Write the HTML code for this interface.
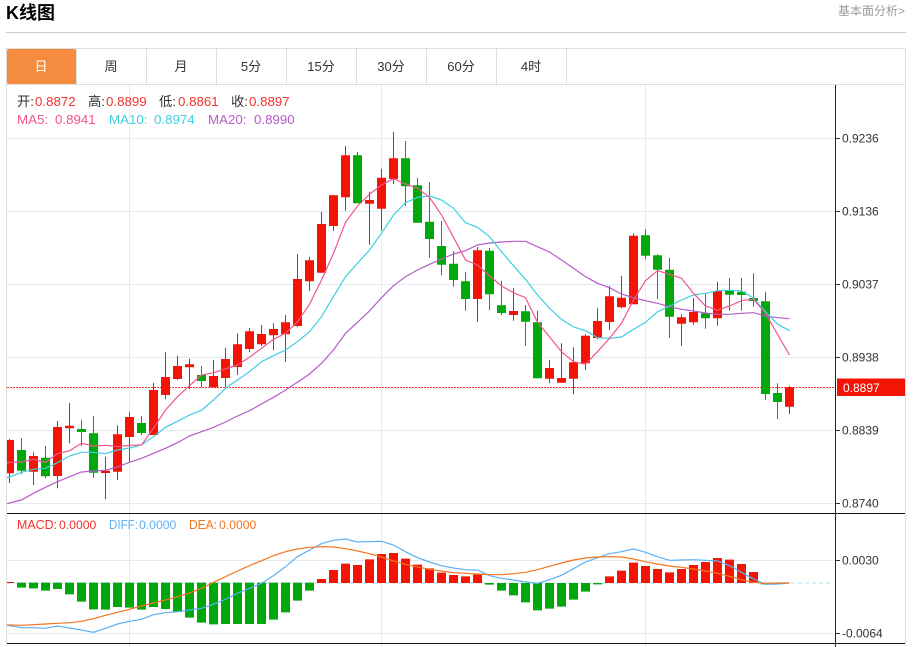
<!DOCTYPE html>
<html lang="zh"><head><meta charset="utf-8"><title>K线图</title>
<style>
html,body{margin:0;padding:0;background:#fff;width:913px;height:647px;overflow:hidden}
svg{position:absolute;left:0;top:0;display:block}
text{font-family:"Liberation Sans","Noto Sans CJK SC",sans-serif}
</style></head><body>
<svg width="913" height="647" viewBox="0 0 913 647" xmlns="http://www.w3.org/2000/svg">
<defs><clipPath id="c"><rect x="7" y="85" width="828.5" height="562"/></clipPath></defs>
<text x="6" y="19" font-size="18" font-weight="700" fill="#000">K线图</text>
<text x="905" y="15" font-size="12" fill="#999" text-anchor="end">基本面分析&gt;</text>
<path d="M6 32.5H906" stroke="#ccc" fill="none"/>
<path d="M6.5 647V48.5H905.5V647" stroke="#ddd" fill="none"/>
<path d="M7 84.5H905M76.5 49V84M146.5 49V84M216.5 49V84M286.5 49V84M356.5 49V84M426.5 49V84M496.5 49V84M566.5 49V84" stroke="#ddd" fill="none"/>
<path d="M9 49H74a2 2 0 0 1 2 2V84H9a2 2 0 0 1-2-2V51a2 2 0 0 1 2-2z" fill="#f48b3f"/>
<g font-size="13" fill="#333" text-anchor="middle">
<text x="41" y="71" fill="#fff">日</text><text x="111" y="71">周</text><text x="181" y="71">月</text><text x="251" y="71">5分</text><text x="321" y="71">15分</text><text x="391" y="71">30分</text><text x="461" y="71">60分</text><text x="531" y="71">4时</text>
</g>
<!-- grid -->
<path d="M7 138.5H835M7 211.5H835M7 284.5H835M7 357.5H835M7 430.5H835M7 503.5H835M7 560.5H835M7 633.5H835M129.5 85V647M381.5 85V647M645.5 85V647" stroke="#e2ebf2" fill="none"/>
<g clip-path="url(#c)">
<path d="M7 387.5H835" stroke="#f5362c" stroke-dasharray="2 1" fill="none"/>
<!-- wicks -->
<path fill="none" stroke="#f21505" d="M9.5 439V483M33.5 452.3V485M57.5 421V488.3M69.5 403V443.3M105.5 456.7V499.3M117.5 425.3V480M129.5 412.3V462M153.5 383V435M165.5 352.3V399.3M177.5 355.7V380M189.5 358.7V389.3M213.5 360V387.3M225.5 348V387.3M237.5 333.3V375M249.5 328V352.3M261.5 325V346M273.5 323.3V350.3M285.5 315V361.7M297.5 254V326.7M309.5 256.7V291M321.5 212V272.7M333.5 195V230.7M345.5 146V210.7M369.5 191.7V244.7M381.5 168.7V230.7M393.5 132V184M477.5 247V321.7M513.5 288.3V320.7M549.5 360V383.3M561.5 343.3V382.7M573.5 347.3V394.3M585.5 334.3V370M597.5 308.3V339.3M609.5 286V330M621.5 276V308.3M633.5 233.3V304.3M681.5 314.3V346M693.5 298V324.7M717.5 281.7V325.7M789.5 386V414"/>
<path fill="none" stroke="#00a80a" d="M21.5 438.3V474M45.5 446V478.3M81.5 419.7V446M93.5 415.7V477.7M141.5 416V435M201.5 366V387.3M357.5 152V203.3M405.5 141V206M417.5 178V222.7M429.5 182.3V257.7M441.5 221V275.3M453.5 251V286.7M465.5 271.7V310.7M489.5 248V310M501.5 280.7V315M525.5 305V345.7M537.5 310.7V378.3M645.5 229.3V259.3M657.5 254.3V299M669.5 257.7V337.7M705.5 294V328.7M729.5 278V310.7M741.5 278V310.7M753.5 273.3V306.7M765.5 291.7V400M777.5 383.3V419"/>
<!-- bodies -->
<path fill="#f21505" d="M5 440h9V473.3h-9zM29 456h9V471.7h-9zM53 427h9V476h-9zM65 425.7h9V428.3h-9zM101 470.7h9V473h-9zM113 434.3h9V471.7h-9zM125 417h9V437h-9zM149 390h9V435h-9zM161 377h9V395h-9zM173 366h9V379h-9zM185 364.3h9V367.3h-9zM209 376h9V387.3h-9zM221 359h9V378h-9zM233 344.3h9V367h-9zM245 331.3h9V349h-9zM257 334h9V344.3h-9zM269 329h9V335.3h-9zM281 322.3h9V334.3h-9zM293 279h9V326h-9zM305 260.3h9V281.3h-9zM317 224h9V272.7h-9zM329 195.3h9V226h-9zM341 155.3h9V197.3h-9zM365 200h9V203.7h-9zM377 177.7h9V208.7h-9zM389 158.3h9V179h-9zM473 250.3h9V299h-9zM509 311h9V315h-9zM545 368h9V378.7h-9zM557 378h9V382.7h-9zM569 362.3h9V378.7h-9zM581 335.7h9V363.3h-9zM593 321h9V338h-9zM605 296.3h9V322h-9zM617 297.7h9V307.3h-9zM629 235.7h9V304.3h-9zM677 317.3h9V323.7h-9zM689 312h9V322.3h-9zM713 291h9V318.3h-9zM785 387.3h9V406.7h-9z"/>
<path fill="#00a80a" d="M17 450h9V470.7h-9zM41 457.7h9V476.3h-9zM77 429h9V432h-9zM89 433.3h9V472.7h-9zM137 423h9V433h-9zM197 375h9V381h-9zM353 155.3h9V203.3h-9zM401 158.3h9V186.3h-9zM413 185.3h9V222.7h-9zM425 221.7h9V239h-9zM437 246h9V264.7h-9zM449 263.7h9V280h-9zM461 281.3h9V299h-9zM485 250.7h9V294.3h-9zM497 305.3h9V313h-9zM521 311.3h9V321.7h-9zM533 322.3h9V378.3h-9zM641 235.3h9V255.7h-9zM653 255.3h9V269.7h-9zM665 269.7h9V316.7h-9zM701 313.3h9V318.3h-9zM725 291h9V294.7h-9zM737 291.7h9V295h-9zM749 298h9V301h-9zM761 301.3h9V394h-9zM773 393h9V402h-9z"/>
<!-- MAs -->
<polyline fill="none" stroke="#b65bca" stroke-width="1.2" points="7,503.7 9.5,503 21.5,500 33.5,493.3 45.5,487.3 57.5,481.7 69.5,476.7 81.5,472 93.5,471 105.5,470.3 117.5,467 129.5,462.3 141.5,458.3 153.5,453.3 165.5,448.3 177.5,442.7 189.5,436 201.5,431.7 213.5,427.3 225.5,422 237.5,416 249.5,410.7 261.5,404 273.5,397.3 285.5,390 297.5,382.3 309.5,374 321.5,363.3 333.5,350 345.5,333.3 357.5,322.3 369.5,311 381.5,297.7 393.5,285.7 405.5,276.7 417.5,270 429.5,264.3 441.5,259 453.5,254 465.5,250.7 477.5,245 489.5,243 501.5,242 513.5,241.3 525.5,241.3 537.5,246.7 549.5,252 561.5,260 573.5,268.3 585.5,276.7 597.5,283.3 609.5,287.7 621.5,294 633.5,297.7 645.5,300.7 657.5,303.3 669.5,306.7 681.5,309.3 693.5,311 705.5,313 717.5,314.3 729.5,314.3 741.5,313.3 753.5,312.7 765.5,316 777.5,317.7 789.5,318.7"/>
<polyline fill="none" stroke="#3ccfe2" stroke-width="1.2" points="7,477.7 9.5,477 21.5,472.3 33.5,469.3 45.5,468.3 57.5,462.7 69.5,456 81.5,452.3 93.5,452.3 105.5,453.7 117.5,450 129.5,448 141.5,445 153.5,436.7 165.5,427.3 177.5,421.3 189.5,415 201.5,410.3 213.5,400 225.5,388.3 237.5,380 249.5,371.7 261.5,361.7 273.5,355.7 285.5,350 297.5,341.7 309.5,331.7 321.5,316.7 333.5,296.7 345.5,276.7 357.5,263.3 369.5,250 381.5,233.3 393.5,215 405.5,202.7 417.5,197.3 429.5,196 441.5,200 453.5,208.3 465.5,222.7 477.5,227.3 489.5,236.7 501.5,251.7 513.5,265.7 525.5,279.3 537.5,295 549.5,308.3 561.5,319.3 573.5,327 585.5,330.7 597.5,337.7 609.5,338.3 621.5,337 633.5,329.3 645.5,322.3 657.5,311.7 669.5,306 681.5,300 693.5,295 705.5,293.3 717.5,290.7 729.5,290.3 741.5,290.7 753.5,298.3 765.5,311.7 777.5,324 789.5,330.7"/>
<polyline fill="none" stroke="#f2558f" stroke-width="1.2" points="7,463.3 9.5,462.3 21.5,462 33.5,459.3 45.5,462.3 57.5,453.7 69.5,450.7 81.5,443.3 93.5,446 105.5,445.3 117.5,446.7 129.5,445.3 141.5,445 153.5,428.3 165.5,410 177.5,396.7 189.5,385.7 201.5,375 213.5,372.7 225.5,369 237.5,365 249.5,357.3 261.5,348.3 273.5,339.3 285.5,333.3 297.5,321.7 309.5,304.3 321.5,280 333.5,253.3 345.5,222.3 357.5,206 369.5,194.3 381.5,185 393.5,178.7 405.5,184 417.5,188.3 429.5,197.3 441.5,215 453.5,237.3 465.5,260 477.5,265 489.5,276 501.5,286 513.5,292.7 525.5,297.7 537.5,322.3 549.5,336.7 561.5,351.7 573.5,361.7 585.5,364.3 597.5,351.7 609.5,338.3 621.5,323.3 633.5,300 645.5,280.7 657.5,270.7 669.5,274.3 681.5,278.3 693.5,293.3 705.5,306 717.5,310.3 729.5,306 741.5,300.7 753.5,299.3 765.5,313.3 777.5,334.3 789.5,355"/>
<!-- MACD -->
<path d="M7 583H832" stroke="#bfe3f0" stroke-width="1.2" stroke-dasharray="4 3" fill="none"/>
<g transform="translate(0 505) scale(.33333)">
<path fill="#f21505" d="M21 231H42V234H21zM951 222h27V234h-27zM987 195h27V234h-27zM1023 176h27V234h-27zM1059 180h27V234h-27zM1095 163h27V234h-27zM1131 147h27V234h-27zM1167 144h27V234h-27zM1203 161h27V234h-27zM1239 179h27V234h-27zM1275 190h27V234h-27zM1311 203h27V234h-27zM1347 210h27V234h-27zM1383 214h27V234h-27zM1419 209h27V234h-27zM1815 214h27V234h-27zM1851 197h27V234h-27zM1887 173h27V234h-27zM1923 183h27V234h-27zM1959 192h27V234h-27zM1995 202h27V234h-27zM2031 192h27V234h-27zM2067 180h27V234h-27zM2103 171h27V234h-27zM2139 159h27V234h-27zM2175 164h27V234h-27zM2211 177h27V234h-27zM2247 201h27V234h-27z"/>
<path fill="#00a80a" d="M51 233h27V248h-27zM87 233h27V250h-27zM123 233h27V257h-27zM159 233h27V252h-27zM195 233h27V268h-27zM231 233h27V290h-27zM267 233h27V313h-27zM303 233h27V314h-27zM339 233h27V306h-27zM375 233h27V308h-27zM411 233h27V314h-27zM447 233h27V306h-27zM483 233h27V312h-27zM519 233h27V321h-27zM555 233h27V338h-27zM591 233h27V353h-27zM627 233h27V358h-27zM663 233h27V357h-27zM699 233h27V357h-27zM735 233h27V357h-27zM771 233h27V357h-27zM807 233h27V344h-27zM843 233h27V322h-27zM879 233h27V287h-27zM915 233h27V257h-27zM1455 234h27V239h-27zM1491 234h27V257h-27zM1527 234h27V271h-27zM1563 234h27V292h-27zM1599 234h27V316h-27zM1635 234h27V311h-27zM1671 234h27V305h-27zM1707 234h27V284h-27zM1743 234h27V260h-27zM1779 234h27V238h-27zM2283 234h27V238h-27zM2319 234h27V238h-27z"/>
<polyline fill="none" stroke="#5cb0f5" stroke-width="3.6" points="21,360 28.5,362 64.5,368 100.5,368 136.5,370 172.5,363 208.5,369 244.5,375 280.5,382 316.5,370 352.5,357 388.5,349 424.5,343 460.5,329 496.5,323 532.5,320 568.5,315 604.5,310 640.5,298 676.5,283 712.5,265 748.5,250 784.5,235 820.5,212 856.5,185 892.5,155 928.5,135 964.5,116 1000.5,106 1036.5,102 1072.5,111 1108.5,110 1144.5,109 1180.5,120 1216.5,140 1252.5,158 1288.5,171 1324.5,182 1360.5,189 1396.5,194 1432.5,195 1468.5,212 1504.5,220 1540.5,225 1576.5,231 1612.5,235 1648.5,224 1684.5,211 1720.5,191 1756.5,171 1792.5,158 1828.5,146 1864.5,140 1900.5,132 1936.5,142 1972.5,155 2008.5,166 2044.5,165 2080.5,164 2116.5,166 2152.5,168 2188.5,182 2224.5,202 2260.5,222 2296.5,238 2332.5,237 2368.5,234"/>
<polyline fill="none" stroke="#f5751f" stroke-width="3.6" points="21,360 28.5,360 64.5,361 100.5,359 136.5,357 172.5,355 208.5,353 244.5,349 280.5,341 316.5,331 352.5,322 388.5,313 424.5,303 460.5,294 496.5,285 532.5,275 568.5,264 604.5,250 640.5,232 676.5,215 712.5,198 748.5,182 784.5,167 820.5,152 856.5,140 892.5,132 928.5,127 964.5,125 1000.5,126 1036.5,131 1072.5,138 1108.5,146 1144.5,156 1180.5,168 1216.5,178 1252.5,186 1288.5,193 1324.5,198 1360.5,203 1396.5,205 1432.5,207 1468.5,209 1504.5,209 1540.5,206 1576.5,202 1612.5,194 1648.5,184 1684.5,174 1720.5,165 1756.5,159 1792.5,156 1828.5,155 1864.5,156 1900.5,162 1936.5,170 1972.5,177 2008.5,183 2044.5,187 2080.5,192 2116.5,198 2152.5,205 2188.5,214 2224.5,224 2260.5,232 2296.5,235 2332.5,234 2368.5,234"/>
</g>
</g>
<!-- frame lines -->
<path d="M7 513.5H905M7 643.5H905" stroke="#111" fill="none"/>
<path d="M835.5 85V647" stroke="#222" fill="none"/>
<path d="M836 138.5H840M836 211.5H840M836 284.5H840M836 357.5H840M836 430.5H840M836 503.5H840M836 560.5H840M836 633.5H840" stroke="#333" fill="none"/>
<g font-size="12" fill="#333">
<text x="842" y="142.5">0.9236</text>
<text x="842" y="215.5">0.9136</text>
<text x="842" y="288.5">0.9037</text>
<text x="842" y="361.5">0.8938</text>
<text x="842" y="434.5">0.8839</text>
<text x="842" y="507.5">0.8740</text>
<text x="842" y="564.5">0.0030</text>
<text x="842" y="637.5">-0.0064</text>
</g>
<rect x="837" y="378.5" width="68" height="17.5" fill="#f21505"/>
<text x="843" y="392" font-size="12" fill="#fff">0.8897</text>
<!-- legends -->
<g font-size="13.3" fill="#333">
<text x="17" y="106">开:</text><text x="35" y="106" fill="#f5332b">0.8872</text>
<text x="88" y="106">高:</text><text x="106" y="106" fill="#f5332b">0.8899</text>
<text x="159" y="106">低:</text><text x="178" y="106" fill="#f5332b">0.8861</text>
<text x="231" y="106">收:</text><text x="249" y="106" fill="#f5332b">0.8897</text>
<text x="17" y="124" fill="#f2558f">MA5:</text><text x="55" y="124" fill="#f2558f">0.8941</text>
<text x="109" y="124" fill="#3ccfe2">MA10:</text><text x="154" y="124" fill="#3ccfe2">0.8974</text>
<text x="208" y="124" fill="#b65bca">MA20:</text><text x="254" y="124" fill="#b65bca">0.8990</text>
</g>
<g font-size="12.2">
<text x="17" y="529" font-size="13" textLength="40" lengthAdjust="spacingAndGlyphs" fill="#f5332b">MACD:</text><text x="59" y="529" fill="#f5332b">0.0000</text>
<text x="109" y="529" font-size="13" textLength="29" lengthAdjust="spacingAndGlyphs" fill="#5cb0f5">DIFF:</text><text x="139" y="529" fill="#5cb0f5">0.0000</text>
<text x="189" y="529" font-size="13" textLength="28" lengthAdjust="spacingAndGlyphs" fill="#f5751f">DEA:</text><text x="219" y="529" fill="#f5751f">0.0000</text>
</g>
</svg>
</body></html>
